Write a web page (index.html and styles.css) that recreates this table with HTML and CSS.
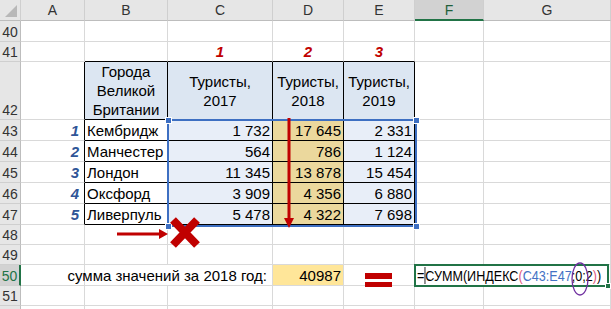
FILE: index.html
```html
<!DOCTYPE html>
<html>
<head>
<meta charset="utf-8">
<link rel="stylesheet" href="styles.css">
</head>
<body>
<div class="sheet">
  <div class="grid">
    <div class="ch corner"><span class="tri"></span></div><div class="ch">A</div><div class="ch">B</div><div class="ch">C</div><div class="ch">D</div><div class="ch">E</div><div class="ch chsel">F</div><div class="ch">G</div>

    <div class="rh">40</div><div class="c"></div><div class="c"></div><div class="c"></div><div class="c"></div><div class="c"></div><div class="c"></div><div class="c"></div>

    <div class="rh">41</div><div class="c"></div><div class="c tt"></div><div class="c tt mark">1</div><div class="c tt mark">2</div><div class="c tt mark">3</div><div class="c"></div><div class="c"></div>

    <div class="rh">42</div><div class="c tl"></div><div class="c tb hd">Города Великой Британии</div><div class="c tb hd">Туристы,<br>2017</div><div class="c tb hd">Туристы,<br>2018</div><div class="c tb hd">Туристы,<br>2019</div><div class="c"></div><div class="c"></div>

    <div class="rh">43</div><div class="c tl idx">1</div><div class="c tb city">Кембридж</div><div class="c tb num sl">1 732</div><div class="c tb num tan">17 645</div><div class="c tb num sl">2 331</div><div class="c"></div><div class="c"></div>

    <div class="rh">44</div><div class="c tl idx">2</div><div class="c tb city">Манчестер</div><div class="c tb num sl">564</div><div class="c tb num tan">786</div><div class="c tb num sl">1 124</div><div class="c"></div><div class="c"></div>

    <div class="rh">45</div><div class="c tl idx">3</div><div class="c tb city">Лондон</div><div class="c tb num sl">11 345</div><div class="c tb num tan">13 878</div><div class="c tb num sl">15 454</div><div class="c"></div><div class="c"></div>

    <div class="rh">46</div><div class="c tl idx">4</div><div class="c tb city">Оксфорд</div><div class="c tb num sl">3 909</div><div class="c tb num tan">4 356</div><div class="c tb num sl">6 880</div><div class="c"></div><div class="c"></div>

    <div class="rh">47</div><div class="c tl idx">5</div><div class="c tb city">Ливерпуль</div><div class="c tb num sl">5 478</div><div class="c tb num tan">4 322</div><div class="c tb num sl">7 698</div><div class="c"></div><div class="c"></div>

    <div class="rh">48</div><div class="c"></div><div class="c"></div><div class="c"></div><div class="c"></div><div class="c"></div><div class="c"></div><div class="c"></div>

    <div class="rh">49</div><div class="c"></div><div class="c"></div><div class="c"></div><div class="c"></div><div class="c"></div><div class="c"></div><div class="c"></div>

    <div class="rh rhsel">50</div><div class="c"></div><div class="c span2 label">сумма значений за 2018 год:</div><div class="c num yel">40987</div><div class="c"></div><div class="c span2 formula"><span class="ftext"><span>=</span><span class="caret"></span><span>СУММ(ИНДЕКС</span><span class="pk">(</span><span class="bl">C43:E47</span><span>;0;2</span><span class="pk">)</span><span>)</span></span></div>

    <div class="rh">51</div><div class="c"></div><div class="c"></div><div class="c"></div><div class="c"></div><div class="c"></div><div class="c"></div><div class="c"></div>

    <div class="rh"></div><div class="c"></div><div class="c"></div><div class="c"></div><div class="c"></div><div class="c"></div><div class="c"></div><div class="c"></div>
  </div>

  <div class="selbox"></div>
  <div class="hdl h1"></div><div class="hdl h2"></div><div class="hdl h3"></div><div class="hdl h4"></div>
  <div class="editbox"></div>
  <div class="edithdl"></div>

  <svg class="over" width="611" height="309" viewBox="0 0 611 309">
    <line x1="289" y1="118" x2="289" y2="219" stroke="#c00000" stroke-width="3"/>
    <polygon points="284,218 294,218 289,228" fill="#c00000"/>
    <line x1="117" y1="234" x2="160" y2="234" stroke="#c00000" stroke-width="3"/>
    <polygon points="159,229 159,239 168,234" fill="#c00000"/>
    <path d="M173 220 L197 245 M197 220 L173 245" stroke="#c00000" stroke-width="8"/>
    <rect x="365" y="273" width="27" height="6" fill="#c00000"/>
    <rect x="365" y="282" width="27" height="5" fill="#c00000"/>
    <ellipse cx="580" cy="279" rx="8" ry="16" fill="none" stroke="#7030a0" stroke-width="1.3"/>
  </svg>
</div>
</body>
</html>
```

FILE: styles.css
```css
* { box-sizing: border-box; }
html, body { margin: 0; padding: 0; background: #fff; }
body { font-family: "Liberation Sans", Arial, sans-serif; color: #000; }

.sheet {
  position: relative;
  width: 611px;
  height: 309px;
  overflow: hidden;
}

.grid {
  display: grid;
  grid-template-columns: 21px 64px 83px 105px 71px 71px 69px 127px;
  grid-template-rows: 21px 21px 20px 58px 21px 21px 21px 21px 21px 20px 20px 21px 20px 20px;
}

.ch {
  background: #e6e6e6;
  border-right: 1px solid #cfcfcf;
  border-bottom: 1px solid #bdbdbd;
  font-size: 14px;
  color: #333;
  display: flex;
  align-items: center;
  justify-content: center;
}
.corner { position: relative; }
.tri {
  position: absolute;
  right: 3px;
  bottom: 3px;
  width: 0;
  height: 0;
  border-left: 12px solid transparent;
  border-bottom: 12px solid #b8b8b8;
}
.chsel {
  background: #d2d2d2;
  border-bottom: 2px solid #217346;
  color: #1f5f3a;
}

.rh {
  background: #e6e6e6;
  border-right: 1px solid #bdbdbd;
  border-bottom: 1px solid #cfcfcf;
  font-size: 14px;
  color: #333;
  display: flex;
  align-items: flex-end;
  justify-content: center;
  padding-bottom: 1px;
}
.rhsel {
  background: #d2d2d2;
  border-right: 2px solid #217346;
  color: #217346;
}

.c {
  border-right: 1px solid #d9d9d9;
  border-bottom: 1px solid #d9d9d9;
  font-size: 15px;
  display: flex;
  align-items: flex-end;
  padding: 0 3px 1px 3px;
  white-space: nowrap;
}
.span2 { grid-column: span 2; }

.tt { border-bottom-color: #000; }
.tl { border-right-color: #000; }
.tb { border-right-color: #000; border-bottom-color: #000; }

.mark {
  justify-content: center;
  color: #c00000;
  font-weight: bold;
  font-style: italic;
}

.hd {
  background: #dce6f2;
  white-space: normal;
  text-align: center;
  line-height: 19px;
  align-items: center;
  justify-content: center;
  padding: 0 2px;
}

.idx {
  justify-content: flex-end;
  color: #2f5597;
  font-weight: bold;
  font-style: italic;
  padding-right: 5px;
}

.city { padding-left: 2px; }
.num { justify-content: flex-end; padding-right: 2px; }
.sl { background: #e8eef8; }
.tan { background: #ebd89d; }
.yel { background: #ffe699; }

.label { justify-content: flex-end; padding-right: 5px; }

.formula {
  padding-left: 2px;
  align-items: center;
  padding-bottom: 0;
  font-size: 15px;
}
.ftext {
  display: inline-flex;
  align-items: center;
  transform: scaleX(0.84);
  transform-origin: left center;
}
.caret {
  display: inline-block;
  width: 1px;
  height: 17px;
  background: #000;
}
.pk { color: #e0567c; }
.bl { color: #4472c4; }

.selbox {
  position: absolute;
  left: 167px;
  top: 119px;
  width: 250px;
  height: 108px;
  border: 2px solid #3d6fc2;
}
.hdl {
  position: absolute;
  width: 7px;
  height: 7px;
  background: #3d6fc2;
  border: 1px solid #fff;
}
.h1 { left: 165px; top: 117px; }
.h2 { left: 413px; top: 117px; }
.h3 { left: 165px; top: 223px; }
.h4 { left: 413px; top: 223px; }

.editbox {
  position: absolute;
  left: 414px;
  top: 264px;
  width: 195px;
  height: 23px;
  border: 2px solid #217346;
}
.edithdl {
  position: absolute;
  left: 605px;
  top: 283px;
  width: 6px;
  height: 6px;
  background: #217346;
  border: 1px solid #fff;
}

.over {
  position: absolute;
  left: 0;
  top: 0;
  pointer-events: none;
}
```
